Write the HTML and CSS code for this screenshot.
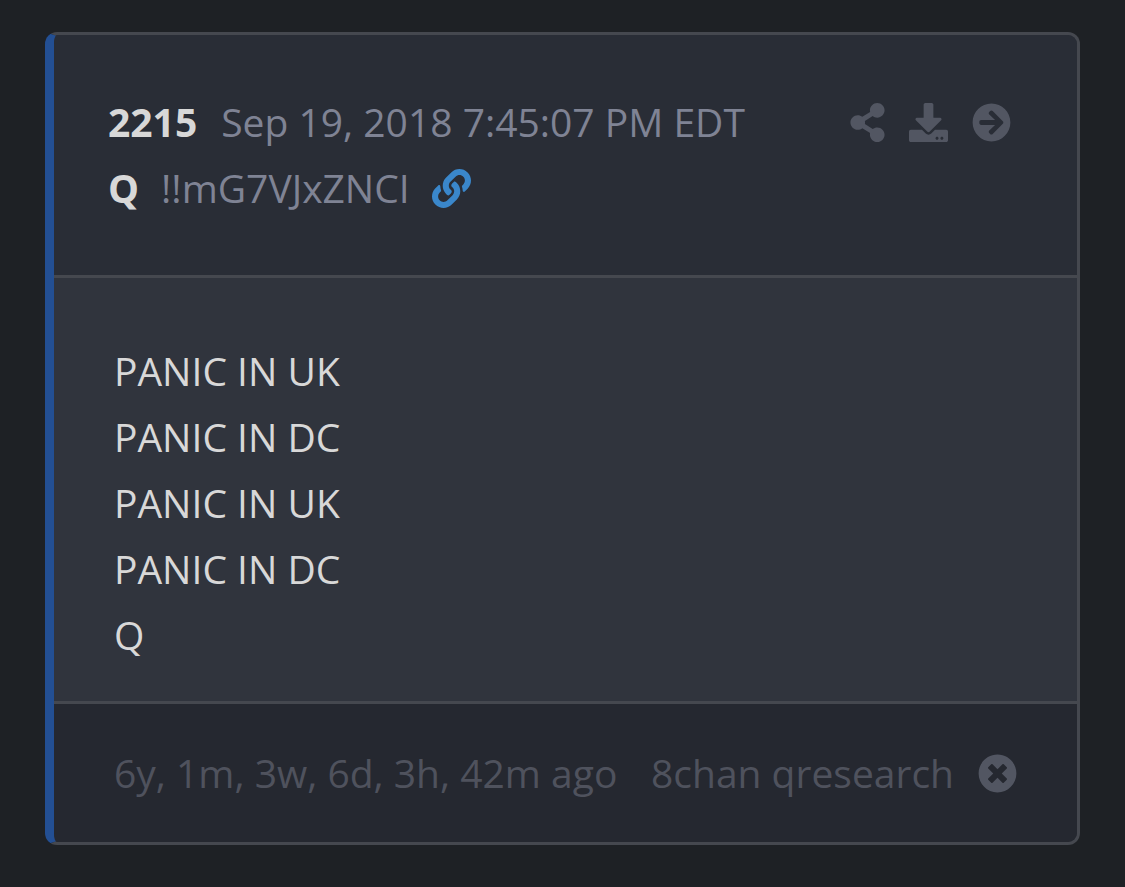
FILE: index.html
```html
<!DOCTYPE html>
<html lang="en">
<head>
<meta charset="utf-8">
<meta name="viewport" content="width=device-width, initial-scale=1">
<title>Post 2215</title>
<link rel="stylesheet" href="styles.css">
</head>
<body>
<article class="post">
  <header class="post-header">
    <div class="post-meta">
      <div class="meta-row">
        <strong class="post-number">2215</strong>
        <time class="post-time" datetime="2018-09-19T19:45:07-04:00">Sep 19, 2018 7:45:07 PM EDT</time>
      </div>
      <div class="meta-row author-row">
        <strong class="post-author">Q</strong>
        <span class="post-trip">!!mG7VJxZNCI</span>
        <a class="post-link" href="#" aria-label="Original post">
          <svg class="icon" viewBox="0 0 512 512" aria-hidden="true"><path d="M326.612 185.391c59.747 59.809 58.927 155.698.36 214.59-.11.12-.24.25-.36.37l-67.2 67.2c-59.27 59.27-155.699 59.262-214.96 0-59.27-59.26-59.27-155.7 0-214.96l37.106-37.106c9.84-9.84 26.786-3.3 27.294 10.606.648 17.722 3.826 35.527 9.69 52.721 1.986 5.822.567 12.262-3.783 16.612l-13.087 13.087c-28.026 28.026-28.905 73.66-1.155 101.96 28.024 28.579 74.086 28.749 102.325.51l67.2-67.19c28.191-28.191 28.073-73.757 0-101.83-3.701-3.694-7.429-6.564-10.341-8.569a16.037 16.037 0 0 1-6.947-12.606c-.396-10.567 3.348-21.456 11.698-29.806l21.054-21.055c5.521-5.521 14.182-6.199 20.584-1.731a152.482 152.482 0 0 1 20.522 17.197zM467.547 44.449c-59.261-59.262-155.69-59.27-214.96 0l-67.2 67.2c-.12.12-.25.25-.36.37-58.566 58.892-59.387 154.781.36 214.59a152.454 152.454 0 0 0 20.521 17.196c6.402 4.468 15.064 3.789 20.584-1.731l21.054-21.055c8.35-8.35 12.094-19.239 11.698-29.806a16.037 16.037 0 0 0-6.947-12.606c-2.912-2.005-6.64-4.875-10.341-8.569-28.073-28.073-28.191-73.639 0-101.83l67.2-67.19c28.239-28.239 74.3-28.069 102.325.51 27.75 28.3 26.872 73.934-1.155 101.96l-13.087 13.087c-4.35 4.35-5.769 10.79-3.783 16.612 5.864 17.194 9.042 34.999 9.69 52.721.509 13.906 17.454 20.446 27.294 10.606l37.106-37.106c59.271-59.259 59.271-155.699.001-214.959z"/></svg>
        </a>
      </div>
    </div>
    <div class="post-actions">
      <button class="icon-button" type="button" aria-label="Share">
        <svg class="icon icon-narrow" viewBox="0 0 448 512" aria-hidden="true"><path d="M352 320c-22.608 0-43.387 7.819-59.79 20.895l-102.486-64.054a96.551 96.551 0 0 0 0-41.683l102.486-64.054C308.613 184.181 329.392 192 352 192c53.019 0 96-42.981 96-96S405.019 0 352 0s-96 42.981-96 96c0 7.158.79 14.13 2.276 20.841L155.79 180.895C139.387 167.819 118.608 160 96 160c-53.019 0-96 42.981-96 96s42.981 96 96 96c22.608 0 43.387-7.819 59.79-20.895l102.486 64.054A96.301 96.301 0 0 0 256 416c0 53.019 42.981 96 96 96s96-42.981 96-96-42.981-96-96-96z"/></svg>
      </button>
      <button class="icon-button" type="button" aria-label="Download">
        <svg class="icon" viewBox="0 0 512 512" aria-hidden="true"><path d="M216 0h80c13.3 0 24 10.7 24 24v168h87.7c17.8 0 26.7 21.5 14.1 34.1L269.7 378.3c-7.5 7.5-19.8 7.5-27.3 0L90.1 226.1c-12.6-12.6-3.7-34.1 14.1-34.1H192V24c0-13.3 10.7-24 24-24zm296 376v112c0 13.3-10.7 24-24 24H24c-13.3 0-24-10.7-24-24V376c0-13.3 10.7-24 24-24h146.7l49 49c20.1 20.1 52.5 20.1 72.6 0l49-49H488c13.3 0 24 10.7 24 24zm-124 88c0-11-9-20-20-20s-20 9-20 20 9 20 20 20 20-9 20-20zm64 0c0-11-9-20-20-20s-20 9-20 20 9 20 20 20 20-9 20-20z"/></svg>
      </button>
      <button class="icon-button" type="button" aria-label="Open post">
        <svg class="icon" viewBox="0 0 512 512" aria-hidden="true"><path d="M256 8c137 0 248 111 248 248S393 504 256 504 8 393 8 256 119 8 256 8zm-28.9 143.6l75.5 72.4H120c-13.3 0-24 10.7-24 24v16c0 13.3 10.7 24 24 24h182.6l-75.5 72.4c-9.7 9.3-9.9 24.8-.4 34.3l11 10.9c9.4 9.4 24.6 9.4 33.9 0L404.3 273c9.4-9.4 9.4-24.6 0-33.9L271.6 106.3c-9.4-9.4-24.6-9.4-33.9 0l-11 10.9c-9.5 9.6-9.3 25.1.4 34.4z"/></svg>
      </button>
    </div>
  </header>
  <div class="post-body">
    <p class="line">PANIC IN UK</p>
    <p class="line">PANIC IN DC</p>
    <p class="line">PANIC IN UK</p>
    <p class="line">PANIC IN DC</p>
    <p class="line">Q</p>
  </div>
  <footer class="post-footer">
    <span class="post-age">6y, 1m, 3w, 6d, 3h, 42m ago</span>
    <span class="post-source">
      <span>8chan qresearch</span>
      <button class="icon-button" type="button" aria-label="Close">
        <svg class="icon" viewBox="0 0 512 512" aria-hidden="true"><path d="M256 8C119 8 8 119 8 256s111 248 248 248 248-111 248-248S393 8 256 8zm121.6 313.1c4.7 4.7 4.7 12.3 0 17L338 377.6c-4.7 4.7-12.3 4.7-17 0L256 312l-65.1 65.6c-4.7 4.7-12.3 4.7-17 0L134.4 338c-4.7-4.7-4.7-12.3 0-17l65.6-65-65.6-65.1c-4.7-4.7-4.7-12.3 0-17l39.6-39.6c4.7-4.7 12.3-4.7 17 0l65 65.7 65.1-65.6c4.7-4.7 12.3-4.7 17 0l39.6 39.6c4.7 4.7 4.7 12.3 0 17L312 256l65.6 65.1z"/></svg>
      </button>
    </span>
  </footer>
</article>
</body>
</html>
```
FILE: styles.css
```css
* {
  box-sizing: border-box;
}

body {
  margin: 0;
  padding: 32px 45px 42px;
  background: #1e2125;
  color: #d8d8d8;
  font-family: "Open Sans", sans-serif;
  font-size: 39px;
  line-height: 66px;
}

.post {
  border: 3px solid #45484f;
  border-left: 9px solid #234f93;
  border-radius: 12px;
  background: #30343d;
  overflow: hidden;
}

.post-header {
  display: flex;
  justify-content: space-between;
  align-items: flex-start;
  padding: 54px 66px 54px 54px;
  border-bottom: 3px solid #45484f;
  background: #292d36;
}

.meta-row {
  display: flex;
  align-items: center;
  gap: 24px;
  color: #7f8394;
}

.author-row {
  gap: 22px;
}

.post-number,
.post-author {
  color: #d8d8d8;
  font-weight: 700;
}

.post-link {
  display: flex;
  color: #3a87cb;
}

.post-actions {
  display: flex;
  align-items: center;
  gap: 24px;
  height: 66px;
}

.icon-button {
  display: flex;
  padding: 0;
  border: 0;
  background: none;
  color: #525662;
  cursor: pointer;
}

.icon {
  display: block;
  width: 39px;
  height: 39px;
  fill: currentColor;
}

.icon-narrow {
  width: 35px;
}

.post-body {
  padding: 60px 60px 33px;
}

.line {
  margin: 0;
}

.post-footer {
  display: flex;
  justify-content: space-between;
  align-items: center;
  padding: 36px 60px;
  border-top: 3px solid #45484f;
  background: #252830;
  color: #4f525d;
}

.post-source {
  display: flex;
  align-items: center;
  gap: 24px;
}
```
